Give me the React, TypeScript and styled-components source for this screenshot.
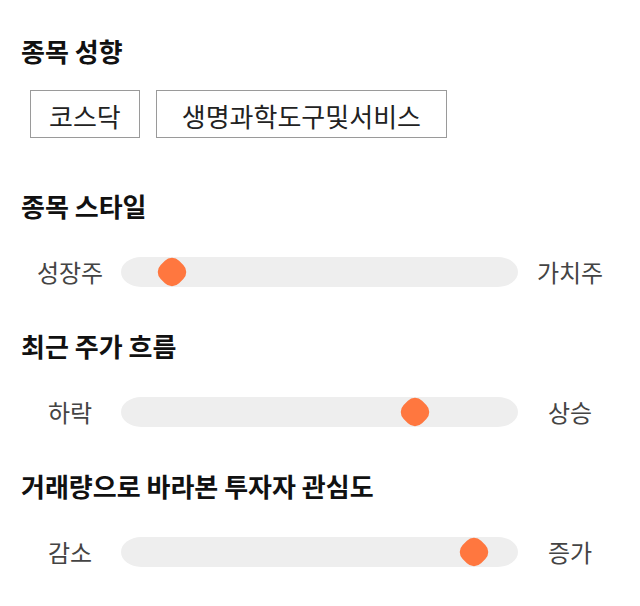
import React from 'react';
import styled, { createGlobalStyle } from 'styled-components';

const GlobalStyle = createGlobalStyle`
  html, body {
    margin: 0;
    padding: 0;
    background: #ffffff;
  }
  body {
    font-family: "Noto Sans CJK KR", "Noto Sans", sans-serif;
  }
`;

const Page = styled.div`
  width: 640px;
  padding: 36px 20px 0 20px;
  box-sizing: border-box;
`;

const Section = styled.section<{ $gap: number; $after: number }>`
  display: flex;
  flex-direction: column;
  gap: ${(p) => p.$gap}px;
  margin-bottom: ${(p) => p.$after}px;
`;

const Heading = styled.h2`
  margin: 0 0 0 1px;
  height: 30px;
  font-size: 26px;
  line-height: 30px;
  font-weight: 700;
  color: #111111;
`;

const TagList = styled.div`
  display: flex;
  gap: 16px;
  padding-left: 10px;
`;

const Tag = styled.div<{ $pad: number }>`
  height: 48px;
  box-sizing: border-box;
  padding: 3px ${(p) => p.$pad}px 0;
  display: flex;
  align-items: center;
  border: 1px solid #9a9a9a;
  font-size: 26px;
  color: #222222;
`;

const SliderRow = styled.div`
  display: grid;
  grid-template-columns: 100px 1fr 100px;
  align-items: center;
  height: 30px;
`;

const SideLabel = styled.span`
  text-align: center;
  font-size: 24px;
  color: #444444;
`;

const Track = styled.div`
  position: relative;
  height: 30px;
  margin: 0 2px 0 1px;
  border-radius: 20px / 15px;
  background: #eeeeee;
`;

const Thumb = styled.div`
  position: absolute;
  top: 2px;
  width: 26px;
  height: 26px;
  margin-left: -13px;
  border-radius: 10px;
  background: #ff773f;
  transform: rotate(45deg);
`;

type Scale = { title: string; left: string; right: string; value: number };

const scales: Scale[] = [
  { title: '종목 스타일', left: '성장주', right: '가치주', value: 10 },
  { title: '최근 주가 흐름', left: '하락', right: '상승', value: 76 },
  { title: '거래량으로 바라본 투자자 관심도', left: '감소', right: '증가', value: 92 },
];

const Slider = ({ left, right, value }: Omit<Scale, 'title'>) => (
  <SliderRow>
    <SideLabel>{left}</SideLabel>
    <Track>
      <Thumb style={{ left: `calc(14px + (100% - 28px) * ${value / 100})` }} />
    </Track>
    <SideLabel>{right}</SideLabel>
  </SliderRow>
);

export default function App() {
  return (
    <Page>
      <GlobalStyle />
      <Section $gap={24} $after={53}>
        <Heading>종목 성향</Heading>
        <TagList>
          <Tag $pad={18}>코스닥</Tag>
          <Tag $pad={25}>생명과학도구및서비스</Tag>
        </TagList>
      </Section>
      {scales.map((s) => (
        <Section key={s.title} $gap={33} $after={47}>
          <Heading>{s.title}</Heading>
          <Slider left={s.left} right={s.right} value={s.value} />
        </Section>
      ))}
    </Page>
  );
}
